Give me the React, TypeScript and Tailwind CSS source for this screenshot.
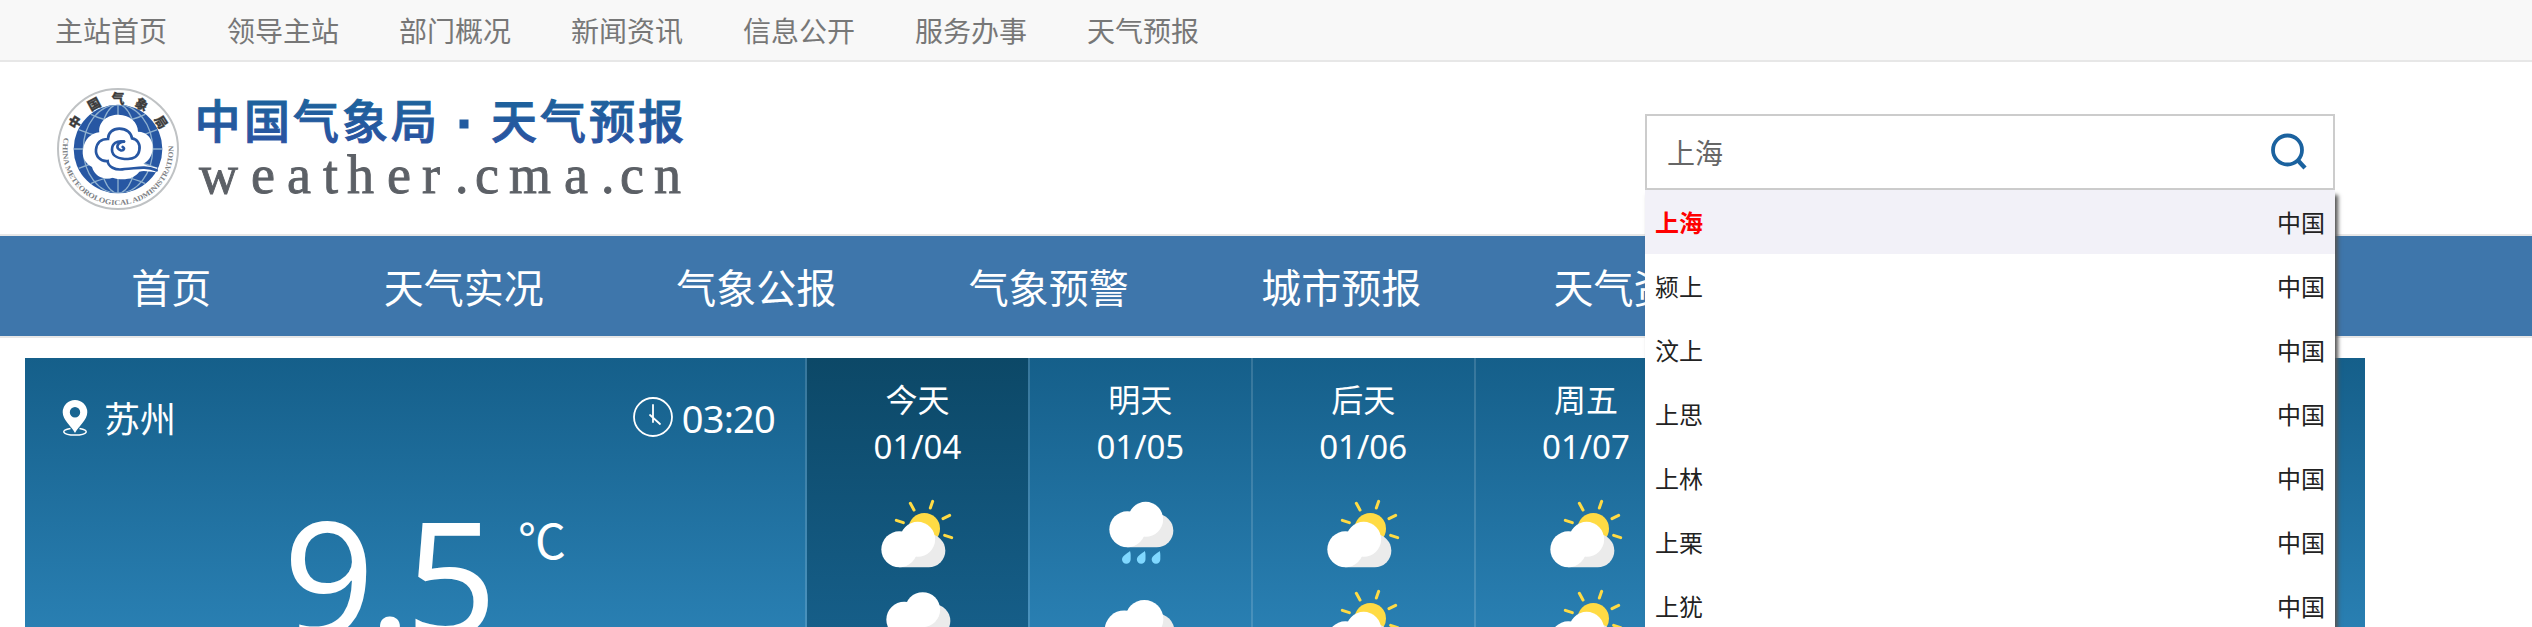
import { ReactNode } from "react";

const topLinks = ["主站首页", "领导主站", "部门概况", "新闻资讯", "信息公开", "服务办事", "天气预报"];
const navItems = ["首页", "天气实况", "气象公报", "气象预警", "城市预报", "天气资"];
const results = ["上海", "颍上", "汶上", "上思", "上林", "上栗", "上犹"];

type Kind = "sun" | "rain" | "cloud" | "overcast";
const days: { name: string; date: string; icons: [Kind, Kind] }[] = [
  { name: "今天", date: "01/04", icons: ["sun", "cloud"] },
  { name: "明天", date: "01/05", icons: ["rain", "overcast"] },
  { name: "后天", date: "01/06", icons: ["sun", "sun"] },
  { name: "周五", date: "01/07", icons: ["sun", "sun"] },
];

function Cloud({ x, y, s = 1 }: { x: number; y: number; s?: number }) {
  return (
    <g transform={`translate(${x} ${y}) scale(${s})`}>
      <path d="M0 54H88A50 50 0 0 0 88 -46H0Z" fill="#ebebeb" />
      <circle cx="0" cy="0" r="54" fill="#fff" />
      <circle cx="55" cy="-30" r="52.5" fill="#fff" />
    </g>
  );
}

function WeatherIcon({ kind }: { kind: Kind }) {
  return (
    <svg viewBox="82 42 240 240" className="h-20 w-20">
      {kind === "sun" && (
        <>
          <circle cx="224" cy="146" r="47" fill="#ffdb44" />
          <g stroke="#ffdb44" strokeWidth="9" strokeLinecap="round">
            <path d="M182 70L193 90M249 64L242 84M280 116L300 106M285 166L306 173M140 121L161 128" />
          </g>
          <Cloud x={149} y={208} />
        </>
      )}
      {kind === "rain" && (
        <>
          <Cloud x={164} y={148} />
          <g fill="#80d8ff">
            {[0, 44.5, 89].map((d) => (
              <path key={d} transform={`translate(${d} 0)`} d="M172 213C175 221 174 230 174 238A13 13 0 0 1 148 238C149 226 164 221 172 213Z" />
            ))}
          </g>
        </>
      )}
      {kind === "cloud" && <Cloud x={164} y={149} />}
      {kind === "overcast" && <Cloud x={155} y={180} s={1.09} />}
    </svg>
  );
}

function Emblem() {
  const glyphs: [string, number][] = [["中", -58], ["国", -28], ["气", 0], ["象", 28], ["局", 58]];
  return (
    <svg viewBox="0 0 372 372" className="h-[124px] w-[124px]">
      <defs>
        <path id="ring" d="M24 152A166 166 0 1 0 348 152" />
        <clipPath id="disc"><circle cx="186" cy="186" r="132" /></clipPath>
      </defs>
      <circle cx="186" cy="186" r="180" fill="#fff" stroke="#bfc2c4" strokeWidth="6" />
      <circle cx="186" cy="186" r="133" fill="#2757a3" />
      <g clipPath="url(#disc)" fill="none" stroke="#8fb1cf" strokeWidth="4">
        <path d="M186 50V322M50 186H322M68 128Q186 178 304 128M68 244Q186 194 304 244M100 80Q186 125 272 80M100 292Q186 247 272 292" />
        <ellipse cx="186" cy="186" rx="57" ry="133" />
        <ellipse cx="186" cy="186" rx="104" ry="133" />
      </g>
      <path
        d="M130 136C126 102 158 82 188 83C222 84 246 106 246 134C272 134 292 156 290 184C289 208 276 224 262 230C276 238 290 238 304 242L298 256C280 254 264 250 250 254C234 276 202 282 170 272C146 280 116 270 108 240C84 228 76 204 82 184C86 156 106 138 130 136Z"
        fill="#fff"
      />
      <g fill="none" stroke="#2757a3" strokeWidth="8" strokeLinecap="round">
        <path d="M302 250C262 234 238 246 206 246C176 252 156 238 155 222C132 224 118 206 120 188C122 168 134 156 156 156C156 138 170 125 190 125C212 125 226 138 228 154C244 156 254 172 250 190C247 208 232 216 216 216C190 216 168 208 168 188C168 168 182 161 204 164" />
        <path d="M204 164C182 166 178 184 194 190C204 192 207 184 200 180" />
      </g>
      <g fontFamily="'Noto Sans CJK SC', sans-serif" fontWeight="900" fontSize="38" fill="#3c3c3c" stroke="#3c3c3c" strokeWidth="1" textAnchor="middle">
        {glyphs.map(([c, a]) => (
          <text key={c} x="186" y="48" transform={`rotate(${a} 186 186)`}>{c}</text>
        ))}
      </g>
      <text fontFamily="'Liberation Serif', serif" fontSize="22" fontWeight="700" fill="#7c8084">
        <textPath href="#ring" textLength="570" lengthAdjust="spacingAndGlyphs">CHINA METEOROLOGICAL ADMINISTRATION</textPath>
      </text>
    </svg>
  );
}

function Wordmark() {
  return (
    <svg viewBox="0 0 500 124" className="h-[124px] w-[500px]">
      <defs>
        <linearGradient id="ink" gradientUnits="userSpaceOnUse" x1="0" y1="12" x2="0" y2="56">
          <stop offset="0" stopColor="#1d639c" />
          <stop offset="1" stopColor="#2b53a1" />
        </linearGradient>
      </defs>
      <text
        x="10.5 60 109 158 207"
        y="51"
        fontFamily="'Noto Sans CJK SC', sans-serif"
        fontSize="46"
        fontWeight="500"
        fill="url(#ink)"
        stroke="url(#ink)"
        strokeWidth="1"
      >
        中国气象局
      </text>
      <rect x="275.5" y="32.5" width="9" height="9" fill="#235ca0" />
      <text
        x="307 356 405 454"
        y="51"
        fontFamily="'Noto Sans CJK SC', sans-serif"
        fontSize="46"
        fontWeight="500"
        fill="url(#ink)"
        stroke="url(#ink)"
        strokeWidth="1"
      >
        天气预报
      </text>
      <text
        x="15 67 103 139 163 203 238 271 291 325 380 417 436 470"
        y="106"
        fontFamily="'Liberation Serif', serif"
        fontSize="54"
        fill="#5c6066"
        stroke="#5c6066"
        strokeWidth="0.9"
      >
        weather.cma.cn
      </text>
    </svg>
  );
}

function SearchPanel() {
  return (
    <div className="relative z-10 mt-[52px] h-[76px] w-[690px]">
      <div className="flex h-[76px] items-center justify-between border-2 border-[#ccc] bg-white pr-[23px] pl-5">
        <span className="pt-0.5 text-[28px] leading-[40px] text-[#666]">上海</span>
        <svg viewBox="0 0 40 40" className="h-10 w-10" fill="none" stroke="#1b629f">
          <circle cx="17.5" cy="18" r="14.5" strokeWidth="3.8" />
          <path d="M28 28.5L35 36" strokeWidth="4.4" />
        </svg>
      </div>
      <ul className="absolute top-[76px] left-0 w-[690px] bg-white text-2xl text-[#222] shadow-[3px_5px_4px_#555]">
        {results.map((r, i) => (
          <li
            key={r}
            className={
              i === 0
                ? "flex h-16 items-center justify-between bg-[#f2f1f8] px-2.5 pt-px"
                : "flex h-16 items-center justify-between px-2.5 pt-px"
            }
          >
            <span className={i === 0 ? "font-bold text-[#f00]" : ""}>{r}</span>
            <span>中国</span>
          </li>
        ))}
      </ul>
    </div>
  );
}

function Inline({ children }: { children: ReactNode }) {
  return <div className="flex items-center">{children}</div>;
}

export default function App() {
  return (
    <div className="h-[627px] w-[2532px] overflow-hidden bg-white font-['Noto_Sans','Noto_Sans_CJK_SC',sans-serif]">
      <div className="flex h-[62px] items-center gap-[60px] border-b-2 border-[#e7e7e7] bg-[#f8f8f8] pt-0.5 pl-[55px] text-[28px] text-[#777]">
        {topLinks.map((t) => (
          <span key={t}>{t}</span>
        ))}
      </div>

      <header className="flex h-[172px] items-start justify-between pr-[197px] pl-[56px]">
        <div className="flex pt-[25px]">
          <Emblem />
          <div className="ml-1">
            <Wordmark />
          </div>
        </div>
        <SearchPanel />
      </header>

      <nav className="h-[104px] border-y-2 border-[#e7e7e7] bg-[#3e76ab] pr-[167px] pl-[25px]">
        <div className="grid h-[100px] grid-cols-8 items-center pt-1 text-[40px] text-white">
          {navItems.map((t, i) => (
            <span key={t} className={i === 5 ? "pl-[66px]" : "text-center"}>{t}</span>
          ))}
        </div>
      </nav>

      <main className="mt-5 ml-[25px] flex h-[269px] w-[2340px] overflow-hidden bg-gradient-to-b from-[#155f8a] to-[#297fb2] text-white">
        <section className="w-[780px] shrink-0">
          <div className="flex h-[120px] items-center justify-between pr-[30px] pl-[37px]">
            <Inline>
              <svg viewBox="0 0 26 37" className="h-[37px] w-[26px]">
                <path fillRule="evenodd" fill="#fff" d="M13 0A12.3 12.3 0 0 1 25.3 12.3C25.3 20 17 26 13 33C9 26 .7 20 .7 12.3A12.3 12.3 0 0 1 13 0ZM13 7A5.2 5.2 0 1 0 13 17.4A5.2 5.2 0 0 0 13 7Z" />
                <path d="M8.5 28.5C-2 30 0 35 13 35S28 30 17.5 28.5" fill="none" stroke="#fff" strokeWidth="1.5" />
              </svg>
              <span className="ml-4 pt-1 text-[36px]">苏州</span>
            </Inline>
            <Inline>
              <svg viewBox="0 0 40 40" className="mb-0.5 h-10 w-10" fill="none" stroke="#fff" strokeWidth="1.8" strokeLinecap="round">
                <circle cx="20" cy="20" r="19" />
                <path d="M20 8V25M17 18L27 27" />
              </svg>
              <span className="ml-[9px] text-[38px] tracking-[-0.8px]">03:20</span>
            </Inline>
          </div>
          <div className="flex items-start pl-[258px]">
            <span className="-mt-1 text-[160px] leading-[200px] tracking-[-6px]">9.5</span>
            <span className="mt-[30px] ml-[27px] font-['Noto_Sans_CJK_SC',sans-serif] text-[48px] leading-[60px]">℃</span>
          </div>
        </section>
        <section className="grid flex-1 grid-cols-7 text-center">
          {days.map((d, i) => (
            <div
              key={d.name}
              className={
                i === 0
                  ? "flex flex-col items-center border-l-2 border-white/15 bg-gradient-to-b from-[#0c4867] to-[#17618d] bg-clip-padding pt-[18px]"
                  : "flex flex-col items-center border-l-2 border-white/15 pt-[18px]"
              }
            >
              <span className="text-[32px] leading-[48px]">{d.name}</span>
              <span className="text-[33px] leading-[46px]">{d.date}</span>
              <div className="mt-6 flex flex-col gap-2.5">
                {d.icons.map((k, j) => (
                  <WeatherIcon key={j} kind={k} />
                ))}
              </div>
            </div>
          ))}
        </section>
      </main>
    </div>
  );
}
